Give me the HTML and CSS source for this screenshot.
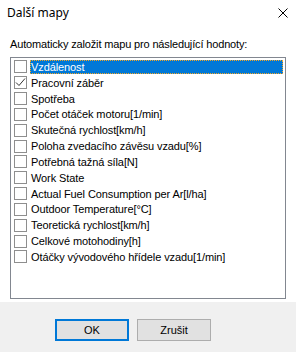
FILE: index.html
```html
<!DOCTYPE html>
<html>
<head>
<meta charset="utf-8">
<link rel="stylesheet" href="styles.css">
</head>
<body>
<div class="dialog">
  <div class="titlebar">
    <span class="title">Další mapy</span>
    <svg class="close" width="10" height="10" viewBox="0 0 10 10"><path d="M0.5 0.5L9.5 9.5M9.5 0.5L0.5 9.5" stroke="#000" stroke-width="1"/></svg>
  </div>
  <div class="content">
    <div class="label">Automaticky založit mapu pro následující hodnoty:</div>
    <div class="listbox">
      <div class="item selected"><span class="cb"></span><span class="txt">Vzdálenost</span></div>
      <div class="item"><span class="cb"><svg width="11" height="11" viewBox="0 0 11 11"><path d="M1 5.5L4 8.5L10 1.5" fill="none" stroke="#333" stroke-width="1"/></svg></span><span class="txt">Pracovní záběr</span></div>
      <div class="item"><span class="cb"></span><span class="txt">Spotřeba</span></div>
      <div class="item"><span class="cb"></span><span class="txt">Počet otáček motoru[1/min]</span></div>
      <div class="item"><span class="cb"></span><span class="txt">Skutečná rychlost[km/h]</span></div>
      <div class="item"><span class="cb"></span><span class="txt">Poloha zvedacího závěsu vzadu[%]</span></div>
      <div class="item"><span class="cb"></span><span class="txt">Potřebná tažná síla[N]</span></div>
      <div class="item"><span class="cb"></span><span class="txt">Work State</span></div>
      <div class="item"><span class="cb"></span><span class="txt">Actual Fuel Consumption per Ar[l/ha]</span></div>
      <div class="item"><span class="cb"></span><span class="txt">Outdoor Temperature[°C]</span></div>
      <div class="item"><span class="cb"></span><span class="txt">Teoretická rychlost[km/h]</span></div>
      <div class="item"><span class="cb"></span><span class="txt">Celkové motohodiny[h]</span></div>
      <div class="item"><span class="cb"></span><span class="txt">Otáčky vývodového hřídele vzadu[1/min]</span></div>
    </div>
  </div>
  <div class="footer">
    <button class="btn primary">OK</button>
    <button class="btn">Zrušit</button>
  </div>
</div>
</body>
</html>
```
FILE: styles.css
```css
html, body {
  margin: 0;
  padding: 0;
  background: #fff;
}
.dialog {
  width: 296px;
  height: 352px;
  display: flex;
  flex-direction: column;
  font-family: "Liberation Sans", Arial, sans-serif;
  font-size: 11px;
  letter-spacing: -0.1px;
  color: #000;
}
.titlebar {
  height: 25px;
  display: flex;
  align-items: center;
  justify-content: space-between;
  padding: 0 8px 0 7px;
  flex: none;
}
.title {
  font-family: "Noto Sans", sans-serif;
  font-size: 12px;
  letter-spacing: 0;
}
.close {
  display: block;
}
.content {
  height: 277px;
  box-sizing: border-box;
  padding: 13px 10px 0 10px;
  flex: none;
}
.label {
  height: 19px;
  line-height: 13px;
  letter-spacing: -0.15px;
}
.listbox {
  height: 242px;
  box-sizing: border-box;
  border: 1px solid #828790;
  padding: 1px 2px 0 2px;
}
.item {
  height: 15.83px;
  display: flex;
  align-items: center;
}
.cb {
  width: 11px;
  height: 11px;
  border: 1px solid #8e8e8e;
  margin: 0 3px 0 1px;
  display: flex;
  align-items: center;
  justify-content: center;
  flex: none;
}
.cb svg { display: block; }
.txt {
  flex: 1;
  height: 14px;
  line-height: 14px;
  padding-left: 1px;
  white-space: nowrap;
}
.selected .txt {
  background: #0078d7;
  color: #fff;
  outline: 1px dotted #f5a623;
  outline-offset: -1px;
}
.footer {
  flex: 1;
  background: #f0f0f0;
  display: flex;
  align-items: flex-start;
  padding: 17px 0 0 55px;
  gap: 8px;
}
.btn {
  width: 74px;
  height: 22px;
  background: #e1e1e1;
  border: 1px solid #adadad;
  font-family: "Liberation Sans", Arial, sans-serif;
  font-size: 11px;
  color: #000;
  padding: 0;
  margin: 0;
}
.btn.primary {
  border: 2px solid #0078d7;
}
```
